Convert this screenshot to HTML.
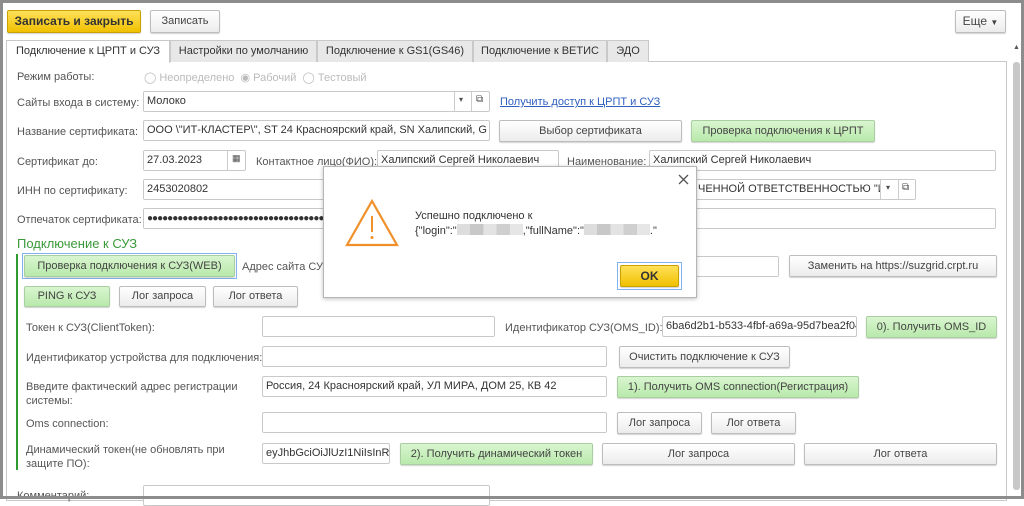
<!DOCTYPE html>
<html><head><meta charset="utf-8"><style>
*{box-sizing:border-box;margin:0;padding:0}
body{width:1024px;height:499px;overflow:hidden;background:#fff;font-family:"Liberation Sans",Arial,sans-serif;font-size:11px;color:#4d4d4d;position:relative}
.a{position:absolute;white-space:nowrap}
.frame{position:absolute;left:0;top:0;width:1024px;height:499px;border:3px solid #8c8c8c}
.btn{position:absolute;border:1px solid #bdbdbd;border-radius:2px;background:linear-gradient(#fff,#ececec);box-shadow:0 1px 1px rgba(0,0,0,.18);text-align:center;color:#444;white-space:nowrap}
.g{background:linear-gradient(#d9f5d0,#b9e9ab);border-color:#a9cfa0}
.y{background:linear-gradient(#ffe15a,#f0c000);border-color:#c9a100;font-weight:bold;color:#333}
.f{position:absolute;border:1px solid #c9c9c9;border-radius:2px;background:#fff;padding-left:3px;color:#333;white-space:nowrap;overflow:hidden}
.tab{position:absolute;top:40px;height:22px;background:#e8e8e8;border:1px solid #c9c9c9;border-bottom:none;line-height:20px;text-align:center;color:#333}
.lab{position:absolute;white-space:nowrap;color:#555;margin-top:2px}
.bl{display:inline-block;height:11px;vertical-align:-1px;background:linear-gradient(90deg,#ddd 0 20%,#c8c8c8 20% 40%,#e3e3e3 40% 60%,#cfcfcf 60% 80%,#e6e6e6 80%)}
</style></head><body>
<div class="btn y" style="left:7px;top:10px;width:134px;height:23px;line-height:21px;font-size:12px">Записать и закрыть</div>
<div class="btn" style="left:150px;top:10px;width:70px;height:23px;line-height:21px">Записать</div>
<div class="btn" style="left:955px;top:10px;width:51px;height:23px;line-height:21px;font-size:12px">Еще <span style="font-size:8px">▼</span></div>

<div style="position:absolute;left:6px;top:61px;width:1001px;height:440px;border:1px solid #c9c9c9"></div>
<div class="tab" style="left:6px;width:164px;background:#fff;height:23px">Подключение к ЦРПТ и СУЗ</div>
<div class="tab" style="left:170px;width:147px">Настройки по умолчанию</div>
<div class="tab" style="left:317px;width:156px">Подключение к GS1(GS46)</div>
<div class="tab" style="left:473px;width:134px">Подключение к ВЕТИС</div>
<div class="tab" style="left:607px;width:42px">ЭДО</div>
<div style="position:absolute;left:1013px;top:62px;width:7px;height:428px;background:#c8c8c8;border-radius:3px"></div>
<div class="a" style="left:1013px;top:44px;font-size:7px;color:#555">▲</div>

<div class="lab" style="left:17px;top:69px">Режим работы:</div>
<div class="lab" style="left:144px;top:69px;color:#bbb">◯ Неопределено &nbsp;◉ Рабочий &nbsp;◯ Тестовый</div>

<div class="lab" style="left:17px;top:95px">Сайты входа в систему:</div>
<div class="f" style="left:143px;top:91px;width:347px;height:21px;line-height:19px">Молоко</div>
<div class="a" style="left:454px;top:92px;width:1px;height:19px;background:#ccc"></div>
<div class="a" style="left:459px;top:95px;font-size:8px">▾</div>
<div class="a" style="left:471px;top:92px;width:1px;height:19px;background:#ccc"></div>
<div class="a" style="left:476px;top:94px;font-size:10px">⧉</div>
<div class="a" style="left:500px;top:96px;color:#2f5fbf;text-decoration:underline">Получить доступ к ЦРПТ и СУЗ</div>

<div class="lab" style="left:17px;top:124px">Название сертификата:</div>
<div class="f" style="left:143px;top:120px;width:347px;height:21px;line-height:19px">ООО \"ИТ-КЛАСТЕР\", ST 24 Красноярский край, SN Халипский, G</div>
<div class="btn" style="left:499px;top:120px;width:183px;height:22px;line-height:20px">Выбор сертификата</div>
<div class="btn g" style="left:691px;top:120px;width:184px;height:22px;line-height:20px">Проверка подключения к ЦРПТ</div>

<div class="lab" style="left:17px;top:154px">Сертификат до:</div>
<div class="f" style="left:143px;top:150px;width:103px;height:21px;line-height:19px">27.03.2023</div>
<div class="a" style="left:227px;top:151px;width:1px;height:19px;background:#ccc"></div>
<div class="a" style="left:232px;top:153px;font-size:9px">▦</div>
<div class="lab" style="left:256px;top:154px">Контактное лицо(ФИО):</div>
<div class="f" style="left:377px;top:150px;width:182px;height:21px;line-height:19px">Халипский Сергей Николаевич</div>
<div class="lab" style="left:567px;top:154px">Наименование:</div>
<div class="f" style="left:649px;top:150px;width:347px;height:21px;line-height:19px">Халипский Сергей Николаевич</div>

<div class="lab" style="left:17px;top:183px">ИНН по сертификату:</div>
<div class="f" style="left:143px;top:179px;width:347px;height:21px;line-height:19px">2453020802</div>
<div class="f" style="left:660px;top:179px;width:256px;height:21px;line-height:19px;padding-left:37px">ЧЕННОЙ ОТВЕТСТВЕННОСТЬЮ "И</div>
<div class="a" style="left:880px;top:180px;width:18px;height:19px;background:#fff;border-left:1px solid #ccc"></div>
<div class="a" style="left:886px;top:183px;font-size:8px">▾</div>
<div class="a" style="left:898px;top:180px;width:17px;height:19px;background:#fff;border-left:1px solid #ccc"></div>
<div class="a" style="left:902px;top:182px;font-size:10px">⧉</div>

<div class="lab" style="left:17px;top:212px">Отпечаток сертификата:</div>
<div class="f" style="left:143px;top:208px;width:853px;height:21px;line-height:19px;font-size:10px;letter-spacing:-1px">●●●●●●●●●●●●●●●●●●●●●●●●●●●●●●●●●●●●●●●●</div>

<div class="a" style="left:17px;top:236px;font-size:13px;color:#3a9a3a">Подключение к СУЗ</div>
<div class="a" style="left:16px;top:254px;width:2px;height:216px;background:#2f9a2f"></div>

<div class="a" style="left:22px;top:253px;width:215px;height:26px;border:1px solid #7fb2ee"></div>
<div class="btn g" style="left:24px;top:255px;width:211px;height:22px;line-height:20px">Проверка подключения к СУЗ(WEB)</div>
<div class="lab" style="left:242px;top:259px">Адрес сайта СУЗ</div>
<div class="f" style="left:600px;top:256px;width:179px;height:21px"></div>
<div class="btn" style="left:789px;top:255px;width:208px;height:22px;line-height:20px">Заменить на https://suzgrid.crpt.ru</div>

<div class="btn g" style="left:24px;top:286px;width:86px;height:21px;line-height:19px">PING к СУЗ</div>
<div class="btn" style="left:119px;top:286px;width:87px;height:21px;line-height:19px">Лог запроса</div>
<div class="btn" style="left:213px;top:286px;width:85px;height:21px;line-height:19px">Лог ответа</div>

<div class="lab" style="left:26px;top:320px">Токен к СУЗ(ClientToken):</div>
<div class="f" style="left:262px;top:316px;width:233px;height:21px"></div>
<div class="lab" style="left:505px;top:320px">Идентификатор СУЗ(OMS_ID):</div>
<div class="f" style="left:662px;top:316px;width:195px;height:21px;line-height:19px">6ba6d2b1-b533-4fbf-a69a-95d7bea2f04</div>
<div class="btn g" style="left:866px;top:316px;width:131px;height:22px;line-height:20px">0). Получить OMS_ID</div>

<div class="lab" style="left:26px;top:350px">Идентификатор устройства для подключения:</div>
<div class="f" style="left:262px;top:346px;width:345px;height:21px"></div>
<div class="btn" style="left:619px;top:346px;width:171px;height:22px;line-height:20px">Очистить подключение к СУЗ</div>

<div class="lab" style="left:26px;top:378px;line-height:14px">Введите фактический адрес регистрации<br>системы:</div>
<div class="f" style="left:262px;top:376px;width:345px;height:21px;line-height:19px">Россия, 24 Красноярский край, УЛ МИРА, ДОМ 25, КВ 42</div>
<div class="btn g" style="left:617px;top:376px;width:242px;height:22px;line-height:20px">1). Получить OMS connection(Регистрация)</div>

<div class="lab" style="left:26px;top:416px">Oms connection:</div>
<div class="f" style="left:262px;top:412px;width:345px;height:21px"></div>
<div class="btn" style="left:617px;top:412px;width:85px;height:22px;line-height:20px">Лог запроса</div>
<div class="btn" style="left:711px;top:412px;width:85px;height:22px;line-height:20px">Лог ответа</div>

<div class="lab" style="left:26px;top:441px;line-height:14px">Динамический токен(не обновлять при<br>защите ПО):</div>
<div class="f" style="left:262px;top:443px;width:128px;height:21px;line-height:19px">eyJhbGciOiJlUzI1NiIsInR5</div>
<div class="btn g" style="left:400px;top:443px;width:193px;height:22px;line-height:20px">2). Получить динамический токен</div>
<div class="btn" style="left:602px;top:443px;width:193px;height:22px;line-height:20px">Лог запроса</div>
<div class="btn" style="left:804px;top:443px;width:193px;height:22px;line-height:20px">Лог ответа</div>

<div class="lab" style="left:17px;top:488px">Комментарий:</div>
<div class="f" style="left:143px;top:485px;width:347px;height:21px"></div>

<!-- dialog -->
<div class="a" style="left:323px;top:166px;width:374px;height:132px;background:#fff;border:1px solid #b5b5b5;box-shadow:0 1px 4px rgba(0,0,0,.25)"></div>
<svg class="a" style="left:678px;top:174px" width="11" height="11" viewBox="0 0 11 11"><path d="M1 1L10 10M10 1L1 10" stroke="#555" stroke-width="1.3"/></svg>
<svg class="a" style="left:345px;top:199px" width="54" height="48" viewBox="0 0 54 48"><path d="M27 2 L52 46 L2 46 Z" fill="none" stroke="#f0902a" stroke-width="2.2"/><path d="M27 17 V33" stroke="#f0902a" stroke-width="2"/><circle cx="27" cy="38.5" r="1.5" fill="#f0902a"/></svg>
<div class="a" style="left:415px;top:210px;color:#333">Успешно подключено к</div>
<div class="a" style="left:415px;top:224px;color:#333">{"login":"<span class="bl" style="width:66px"></span>,"fullName":"<span class="bl" style="width:66px"></span>."</div>
<div class="a" style="left:617px;top:262px;width:65px;height:28px;border:1px solid #7fb2ee"></div>
<div class="btn y" style="left:620px;top:265px;width:59px;height:22px;line-height:20px;font-size:12px">OK</div>

<div class="frame"></div>
</body></html>
